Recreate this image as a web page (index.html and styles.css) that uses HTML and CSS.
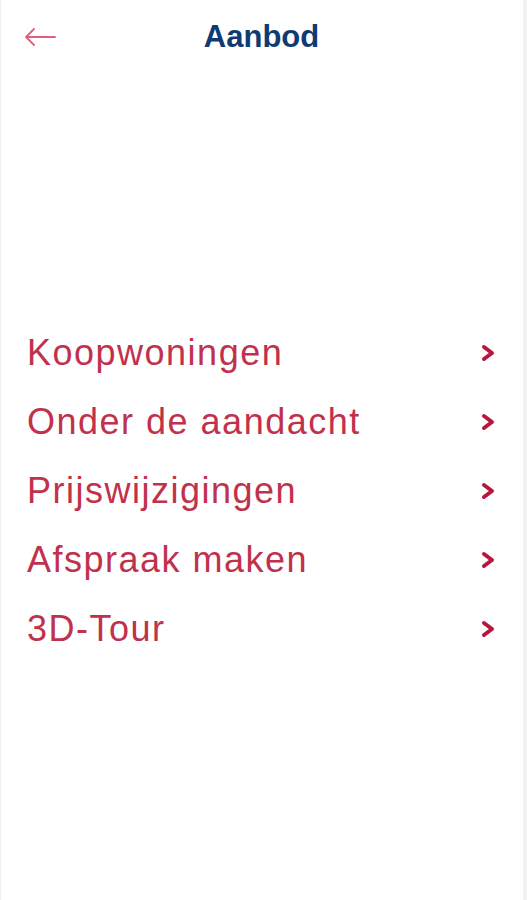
FILE: index.html
```html
<!DOCTYPE html>
<html lang="nl">
<head>
<meta charset="utf-8">
<title>Aanbod</title>
<link rel="stylesheet" href="styles.css">
</head>
<body>
<div class="screen">
  <header class="topbar">
    <button class="back" aria-label="Terug">
      <svg width="32" height="18" viewBox="0 0 32 18"><path d="M31 9H2M10 1L2 9l8 8" fill="none" stroke="#e0607c" stroke-width="1.8" stroke-linecap="round" stroke-linejoin="round"/></svg>
    </button>
    <h1 class="title">Aanbod</h1>
  </header>
  <ul class="menu">
    <li class="item"><span class="label">Koopwoningen</span><svg class="chev" width="16" height="20" viewBox="0 0 16 20"><path d="M4 4l8 6-8 6" fill="none" stroke="#b8173d" stroke-width="4" stroke-linecap="round" stroke-linejoin="round"/></svg></li>
    <li class="item"><span class="label">Onder de aandacht</span><svg class="chev" width="16" height="20" viewBox="0 0 16 20"><path d="M4 4l8 6-8 6" fill="none" stroke="#b8173d" stroke-width="4" stroke-linecap="round" stroke-linejoin="round"/></svg></li>
    <li class="item"><span class="label">Prijswijzigingen</span><svg class="chev" width="16" height="20" viewBox="0 0 16 20"><path d="M4 4l8 6-8 6" fill="none" stroke="#b8173d" stroke-width="4" stroke-linecap="round" stroke-linejoin="round"/></svg></li>
    <li class="item"><span class="label">Afspraak maken</span><svg class="chev" width="16" height="20" viewBox="0 0 16 20"><path d="M4 4l8 6-8 6" fill="none" stroke="#b8173d" stroke-width="4" stroke-linecap="round" stroke-linejoin="round"/></svg></li>
    <li class="item"><span class="label">3D-Tour</span><svg class="chev" width="16" height="20" viewBox="0 0 16 20"><path d="M4 4l8 6-8 6" fill="none" stroke="#b8173d" stroke-width="4" stroke-linecap="round" stroke-linejoin="round"/></svg></li>
  </ul>
</div>
</body>
</html>
```
FILE: styles.css
```css
* { box-sizing: border-box; }
html, body { margin: 0; padding: 0; background: #fff; }
body { font-family: "Liberation Sans", Arial, sans-serif; }
.screen {
  width: 527px;
  height: 900px;
  border-left: 1px solid #f0f0f0;
  border-right: 4px solid #f2f2f2;
  background: #fff;
  overflow: hidden;
}
.topbar {
  height: 74px;
  display: flex;
  align-items: center;
  padding: 0 0 0 23px;
}
.back {
  width: 40px;
  border: 0;
  background: none;
  padding: 0;
  display: flex;
  align-items: center;
}
.title {
  flex: 1;
  margin: 0;
  text-align: center;
  font-size: 31px;
  font-weight: bold;
  color: #0f3a72;
  padding-right: 64px;
}
.menu {
  list-style: none;
  margin: 244px 0 0 0;
  padding: 0 27px 0 26px;
}
.item {
  height: 69px;
  display: flex;
  align-items: center;
  justify-content: space-between;
}
.label {
  font-size: 36px;
  color: #c2314c;
  letter-spacing: 1.5px;
}
.chev { flex: none; }
```
